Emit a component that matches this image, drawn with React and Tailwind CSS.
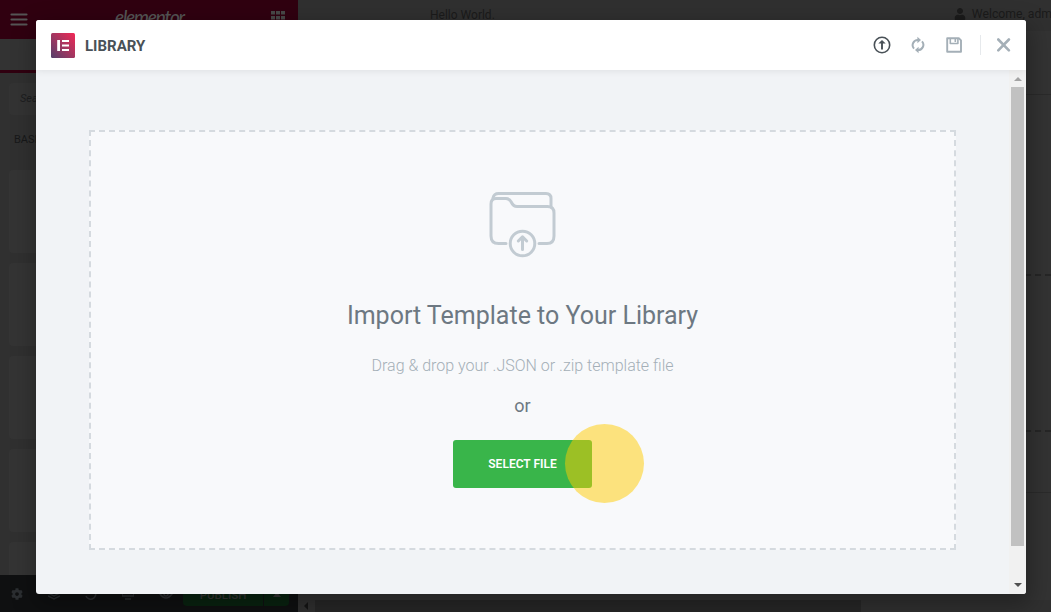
import React from 'react';
import { FaCog, FaUser } from 'react-icons/fa';

function ElementorMark() {
  return (
    <svg width="24" height="25" viewBox="0 0 24 25" className="shrink-0">
      <defs>
        <linearGradient id="mark" x1="0" y1="1" x2="1" y2="0">
          <stop offset="0" stopColor="#54406c" />
          <stop offset="0.5" stopColor="#a33660" />
          <stop offset="1" stopColor="#f22856" />
        </linearGradient>
      </defs>
      <rect width="24" height="25" rx="1.5" fill="url(#mark)" />
      <path d="M6.200 7h2.800v11H6.200zM11 7h7v2h-7zM11 11.500h7v2h-7zM11 16h7v2h-7z" fill="#fff" />
    </svg>
  );
}

function UploadIcon() {
  return (
    <svg width="18" height="18" viewBox="0 0 18 18" fill="none" stroke="#495157" strokeWidth="1.600">
      <circle cx="9" cy="9" r="7.700" />
      <path d="M9 13.500V6" strokeWidth="1.900" />
      <path d="M5.300 7.600 9 3.900l3.700 3.700z" fill="#495157" stroke="none" />
    </svg>
  );
}

function SyncIcon() {
  return (
    <svg width="14" height="18" viewBox="0 0 14 18" fill="none" stroke="#a4afb7" strokeWidth="2">
      <path d="M3 12.700A5.200 5.200 0 0 1 7 4M11 5.300A5.200 5.200 0 0 1 7 14" />
      <path d="M6.400 .8v6.400L10 4zM7.600 10.800v6.400L4 14z" fill="#a4afb7" stroke="none" />
    </svg>
  );
}

function SaveIcon() {
  return (
    <svg width="16" height="16" viewBox="0 0 16 16" fill="none" stroke="#a4afb7" strokeWidth="1.900" strokeLinejoin="round">
      <path d="M1.200 1.200h11.600l2.200 2.200v11.400H1.200z" />
      <path d="M4.300 1.200v5.300h7.600V1.200M9.300 2v3" strokeWidth="1.600" />
    </svg>
  );
}

function FolderIcon() {
  return (
    <svg width="67" height="67" viewBox="0.500 0 67 67" fill="none" stroke="#c2cbd2" strokeWidth="3" strokeLinecap="round" strokeLinejoin="round">
      <path d="M4.500 7C5.200 3.800 7 2.500 10 2.500h47.500c3.500 0 5 2 5 5V16" />
      <path d="M17.500 52.500H10c-5 0-7.500-2.500-7.500-7.500V13c0-4 1.500-5.500 5-5.500h10c3 0 4 1 5.200 3.500 1.600 3.500 2.800 4.500 5.800 4.500H59c4.500 0 6.500 2.500 6.500 6.500v23c0 5-2.500 7.500-7 7.500h-8" />
      <circle cx="34" cy="52.500" r="12.300" />
      <path d="M34 58.500V46.500M29.800 50l4.200-4.200 4.200 4.200" />
    </svg>
  );
}

function Sidebar() {
  return (
    <aside className="flex h-full w-[298px] shrink-0 flex-col bg-[#303030]">
      <header className="flex h-[39px] shrink-0 items-center justify-between bg-[#300010] pl-[10px] pr-[13px]">
        <svg width="18" height="14" viewBox="0 0 18 14" stroke="#555" strokeWidth="2.200" strokeLinecap="round">
          <path d="M1.500 1.500h15M1.500 6.500h15M1.500 11.500h15" />
        </svg>
        <span className="-mt-[7px] font-['Lato',cursive] text-[19px] font-medium italic leading-none -tracking-[1.200px] text-[#555]">elementor</span>
        <svg className="-mt-[3px]" width="14" height="14" viewBox="0 0 14 14" fill="#484848">
          <path d="M0 0h4v3.500H0zM5 0h4v3.500H5zM10 0h4v3.500h-4zM0 5h4v3.500H0zM5 5h4v3.500H5zM10 5h4v3.500h-4zM0 10h4v3.500H0zM5 10h4v3.500H5zM10 10h4v3.500h-4z" />
        </svg>
      </header>
      <div className="h-[34px] shrink-0 border-b-[3px] border-[#300010] bg-[#333]" />
      <div className="flex min-h-0 flex-1 flex-col overflow-hidden px-[9px] pt-[10px]">
        <div className="flex h-[32px] shrink-0 items-center rounded-sm bg-[#333] pl-[11px] pt-px text-[11px] italic text-[#1d1e20]">Search Widget...</div>
        <div className="flex h-[55px] shrink-0 items-center pb-[4px] pl-[5px] text-[11px] text-[#171819]">BASIC</div>
        <div className="grid grid-cols-2 gap-[10px]">
          {Array.from({ length: 10 }, (_, i) => (
            <div key={i} className="h-[83px] rounded-sm bg-[#343434]" />
          ))}
        </div>
      </div>
      <footer className="flex h-[37px] shrink-0 items-center bg-[#0f1011] pl-[11px] pr-[9px] text-[#2b2e31]">
        <div className="flex flex-1 items-center gap-[25px]">
          <FaCog size={12} />
          <svg width="12" height="12" viewBox="0 0 12 12" fill="none" stroke="currentColor" strokeWidth="1.500"><path d="M0 5l6 3 6-3M0 8l6 3 6-3M0 3l6-3 6 3-6 2z" /></svg>
          <svg width="12" height="12" viewBox="0 0 12 12" fill="none" stroke="currentColor" strokeWidth="1.600"><path d="M1 8a5 5 0 1 0 2-6M3 0v3h3" /></svg>
          <svg width="12" height="12" viewBox="0 0 12 12" fill="none" stroke="currentColor" strokeWidth="1.600"><path d="M0 1h12v7H0zM3 11h6" /></svg>
          <svg width="14" height="10" viewBox="0 0 14 10" fill="none" stroke="currentColor" strokeWidth="1.600"><path d="M1 5q6-8 12 0-6 8-12 0z" /><circle cx="7" cy="5" r="2" /></svg>
        </div>
        <div className="mb-1 flex h-[29px] gap-px">
          <span className="flex w-[80px] items-center justify-center rounded-l-sm bg-[#092310] pt-[9px] text-[11.500px] font-medium text-[#343434]">PUBLISH</span>
          <span className="flex w-[25px] items-center justify-center rounded-r-sm bg-[#092310] pt-[5px]">
            <svg width="8" height="5" viewBox="0 0 8 5" fill="#343434"><path d="M4 0l4 5H0z" /></svg>
          </span>
        </div>
      </footer>
    </aside>
  );
}

function Canvas() {
  return (
    <section className="flex h-full min-w-0 flex-1 flex-col bg-[#333]">
      <div className="flex h-[31px] shrink-0 items-center justify-between overflow-hidden whitespace-nowrap bg-[#303030] pb-[2px] pl-[132px] text-[12px] text-[#1b1b1b]">
        <span>Hello World.</span>
        <span className="flex items-center gap-[6px]">
          <FaUser size={12} />
          <span className="-mr-px text-[12.200px]">Welcome, adm</span>
        </span>
      </div>
      <div className="h-[64px] shrink-0 border-b border-[#2b2b2b]" />
      <div className="h-[179px] shrink-0" />
      <div className="h-[158px] shrink-0 border-y-2 border-dashed border-[#262626]" />
      <div className="h-[61px] shrink-0 border-b border-[#2b2b2b]" />
      <div className="flex-1" />
      <div className="flex h-3 shrink-0 items-center bg-[#303030]">
        <svg width="17" height="8" viewBox="0 0 17 8" fill="#151515"><path d="M10 0v8L6 4z" /></svg>
        <div className="h-full w-[546px] bg-[#272727]" />
      </div>
    </section>
  );
}

function Scrollbar() {
  return (
    <div className="flex w-[17px] shrink-0 flex-col items-center bg-[#f1f1f1]">
      <div className="flex h-[17px] items-center justify-center">
        <svg width="8" height="4" viewBox="0 0 8 4" fill="#a3a3a3"><path d="M4 0l4 4H0z" /></svg>
      </div>
      <div className="h-[459px] w-[13px] bg-[#c1c1c1]" />
      <div className="flex-1" />
      <div className="flex h-[18px] items-center justify-center">
        <svg width="8" height="4" viewBox="0 0 8 4" fill="#505050"><path d="M4 4l4-4H0z" /></svg>
      </div>
    </div>
  );
}

function LibraryModal() {
  return (
    <div className="flex h-[574px] w-[990px] flex-col overflow-hidden rounded-[3px] bg-[#f1f3f6] shadow-[2px_8px_23px_3px_rgba(0,0,0,0.3)]">
      <header className="z-10 flex h-[50px] shrink-0 items-center bg-white pl-[15px] pr-[15px] shadow-[0_0_8px_rgba(0,0,0,0.1)]">
        <ElementorMark />
        <h1 className="ml-[10px] flex-1 pt-px text-[15px] font-bold leading-[20px] text-[#495157]">LIBRARY</h1>
        <div className="flex items-center">
          <UploadIcon />
          <span className="ml-[20px]"><SyncIcon /></span>
          <span className="ml-[21px]"><SaveIcon /></span>
          <span className="ml-[18px] h-5 w-px bg-[#e6e9ec]" />
          <svg className="ml-[16px]" width="14" height="14" viewBox="0 0 14 14" stroke="#a4afb7" strokeWidth="2.600" strokeLinecap="round">
            <path d="M1.300 1.500l10.600 10.800M11.900 1.500L1.300 12.300" />
          </svg>
        </div>
      </header>
      <div className="flex min-h-0 flex-1">
        <main className="flex-1 px-[53px] pt-[60px]">
          <div className="flex h-[420px] flex-col items-center border-2 border-dashed border-[#d5dadf] bg-[#f8f9fb] pt-[59px]">
            <FolderIcon />
            <h2 className="mt-[40px] text-[25px] leading-[36px] text-[#6d7882]">Import Template to Your Library</h2>
            <p className="mt-[20px] text-[16px] font-light leading-[24px] text-[#a4afb7]">Drag &amp; drop your .JSON or .zip template file</p>
            <p className="mt-[15px] text-[18px] leading-[26px] text-[#6d7882]">or</p>
            <button className="relative mt-[21px] h-[48px] w-[139px] rounded-[3px] bg-[#39b54a] text-[12px] font-semibold text-white">
              SELECT FILE
              <span className="absolute left-[111.500px] top-[-16px] size-[79px] rounded-full bg-[#ffcd00]/50" />
            </button>
          </div>
        </main>
        <Scrollbar />
      </div>
    </div>
  );
}

export default function App() {
  return (
    <div className="relative flex h-[612px] w-[1051px] overflow-hidden bg-[#333] font-['Roboto',sans-serif]">
      <Sidebar />
      <Canvas />
      <div className="absolute inset-0 pl-[36px] pt-[20px]">
        <LibraryModal />
      </div>
    </div>
  );
}
